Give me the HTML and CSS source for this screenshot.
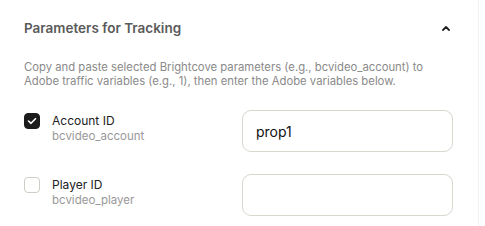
FILE: index.html
```html
<!DOCTYPE html>
<html lang="en">
<head>
    <meta charset="UTF-8">
    <title>Parameters for Tracking</title>
    <link rel="stylesheet" href="styles.css">
</head>
<body>
    <div class="panel">
        <div class="panel-header">
            <div class="panel-title">Parameters for Tracking</div>
            <svg class="chevron" width="10" height="6" viewBox="0 0 10 6">
                <path d="M2 5 L5 2 L8 5" fill="none" stroke="#222" stroke-width="1.8" stroke-linecap="round" stroke-linejoin="round"/>
            </svg>
        </div>
        <p class="panel-desc">Copy and paste selected Brightcove parameters (e.g., bcvideo_account) to Adobe traffic variables (e.g., 1), then enter the Adobe variables below.</p>

        <div class="param-row">
            <label class="param-label">
                <span class="checkbox checked">
                    <svg width="10" height="8" viewBox="0 0 10 8">
                        <path d="M1.5 4 L4 6.3 L8.5 1.7" fill="none" stroke="#fff" stroke-width="1.6" stroke-linecap="round" stroke-linejoin="round"/>
                    </svg>
                </span>
                <span class="param-text">
                    <span class="param-name">Account ID</span>
                    <span class="param-key">bcvideo_account</span>
                </span>
            </label>
            <input class="param-input" type="text" value="prop1">
        </div>

        <div class="param-row">
            <label class="param-label">
                <span class="checkbox"></span>
                <span class="param-text">
                    <span class="param-name">Player ID</span>
                    <span class="param-key">bcvideo_player</span>
                </span>
            </label>
            <input class="param-input" type="text" value="">
        </div>
    </div>
</body>
</html>
```

FILE: styles.css
```css
* {
    margin: 0;
    padding: 0;
    box-sizing: border-box;
    font-family: 'Inter', 'Liberation Sans', sans-serif;
}

body {
    background: #fff;
}

.panel {
    width: 479px;
    height: 226px;
    border-right: 1px solid #f0f0f0;
    padding: 0 25px 0 24px;
}

.panel-header {
    height: 56px;
    display: flex;
    align-items: center;
    justify-content: space-between;
    padding-right: 2px;
}

.panel-title {
    font-size: 13.5px;
    font-weight: 600;
    color: #5a5a5a;
}

.panel-desc {
    font-size: 11.3px;
    line-height: 14px;
    color: #8a8a8a;
    margin-top: 4px;
}

.param-row {
    display: flex;
    align-items: center;
    justify-content: space-between;
    height: 42px;
    margin-top: 22px;
}

.param-label {
    display: flex;
    align-items: flex-start;
    gap: 12px;
    padding-bottom: 6px;
}

.checkbox {
    width: 16px;
    height: 16px;
    margin-top: 0;
    border: 1px solid #cfcdc6;
    border-radius: 4px;
    display: flex;
    align-items: center;
    justify-content: center;
}

.checkbox.checked {
    background: #1c1c1c;
    border-color: #1c1c1c;
}

.param-text {
    display: flex;
    flex-direction: column;
}

.param-name {
    font-size: 12px;
    line-height: 16px;
    color: #222;
}

.param-key {
    font-size: 11.5px;
    line-height: 15px;
    color: #999;
}

.param-input {
    width: 211px;
    height: 42px;
    border: 1px solid #d9d6cf;
    border-radius: 9px;
    padding: 0 13px;
    font-size: 14px;
    color: #111;
    outline: none;
}
```
